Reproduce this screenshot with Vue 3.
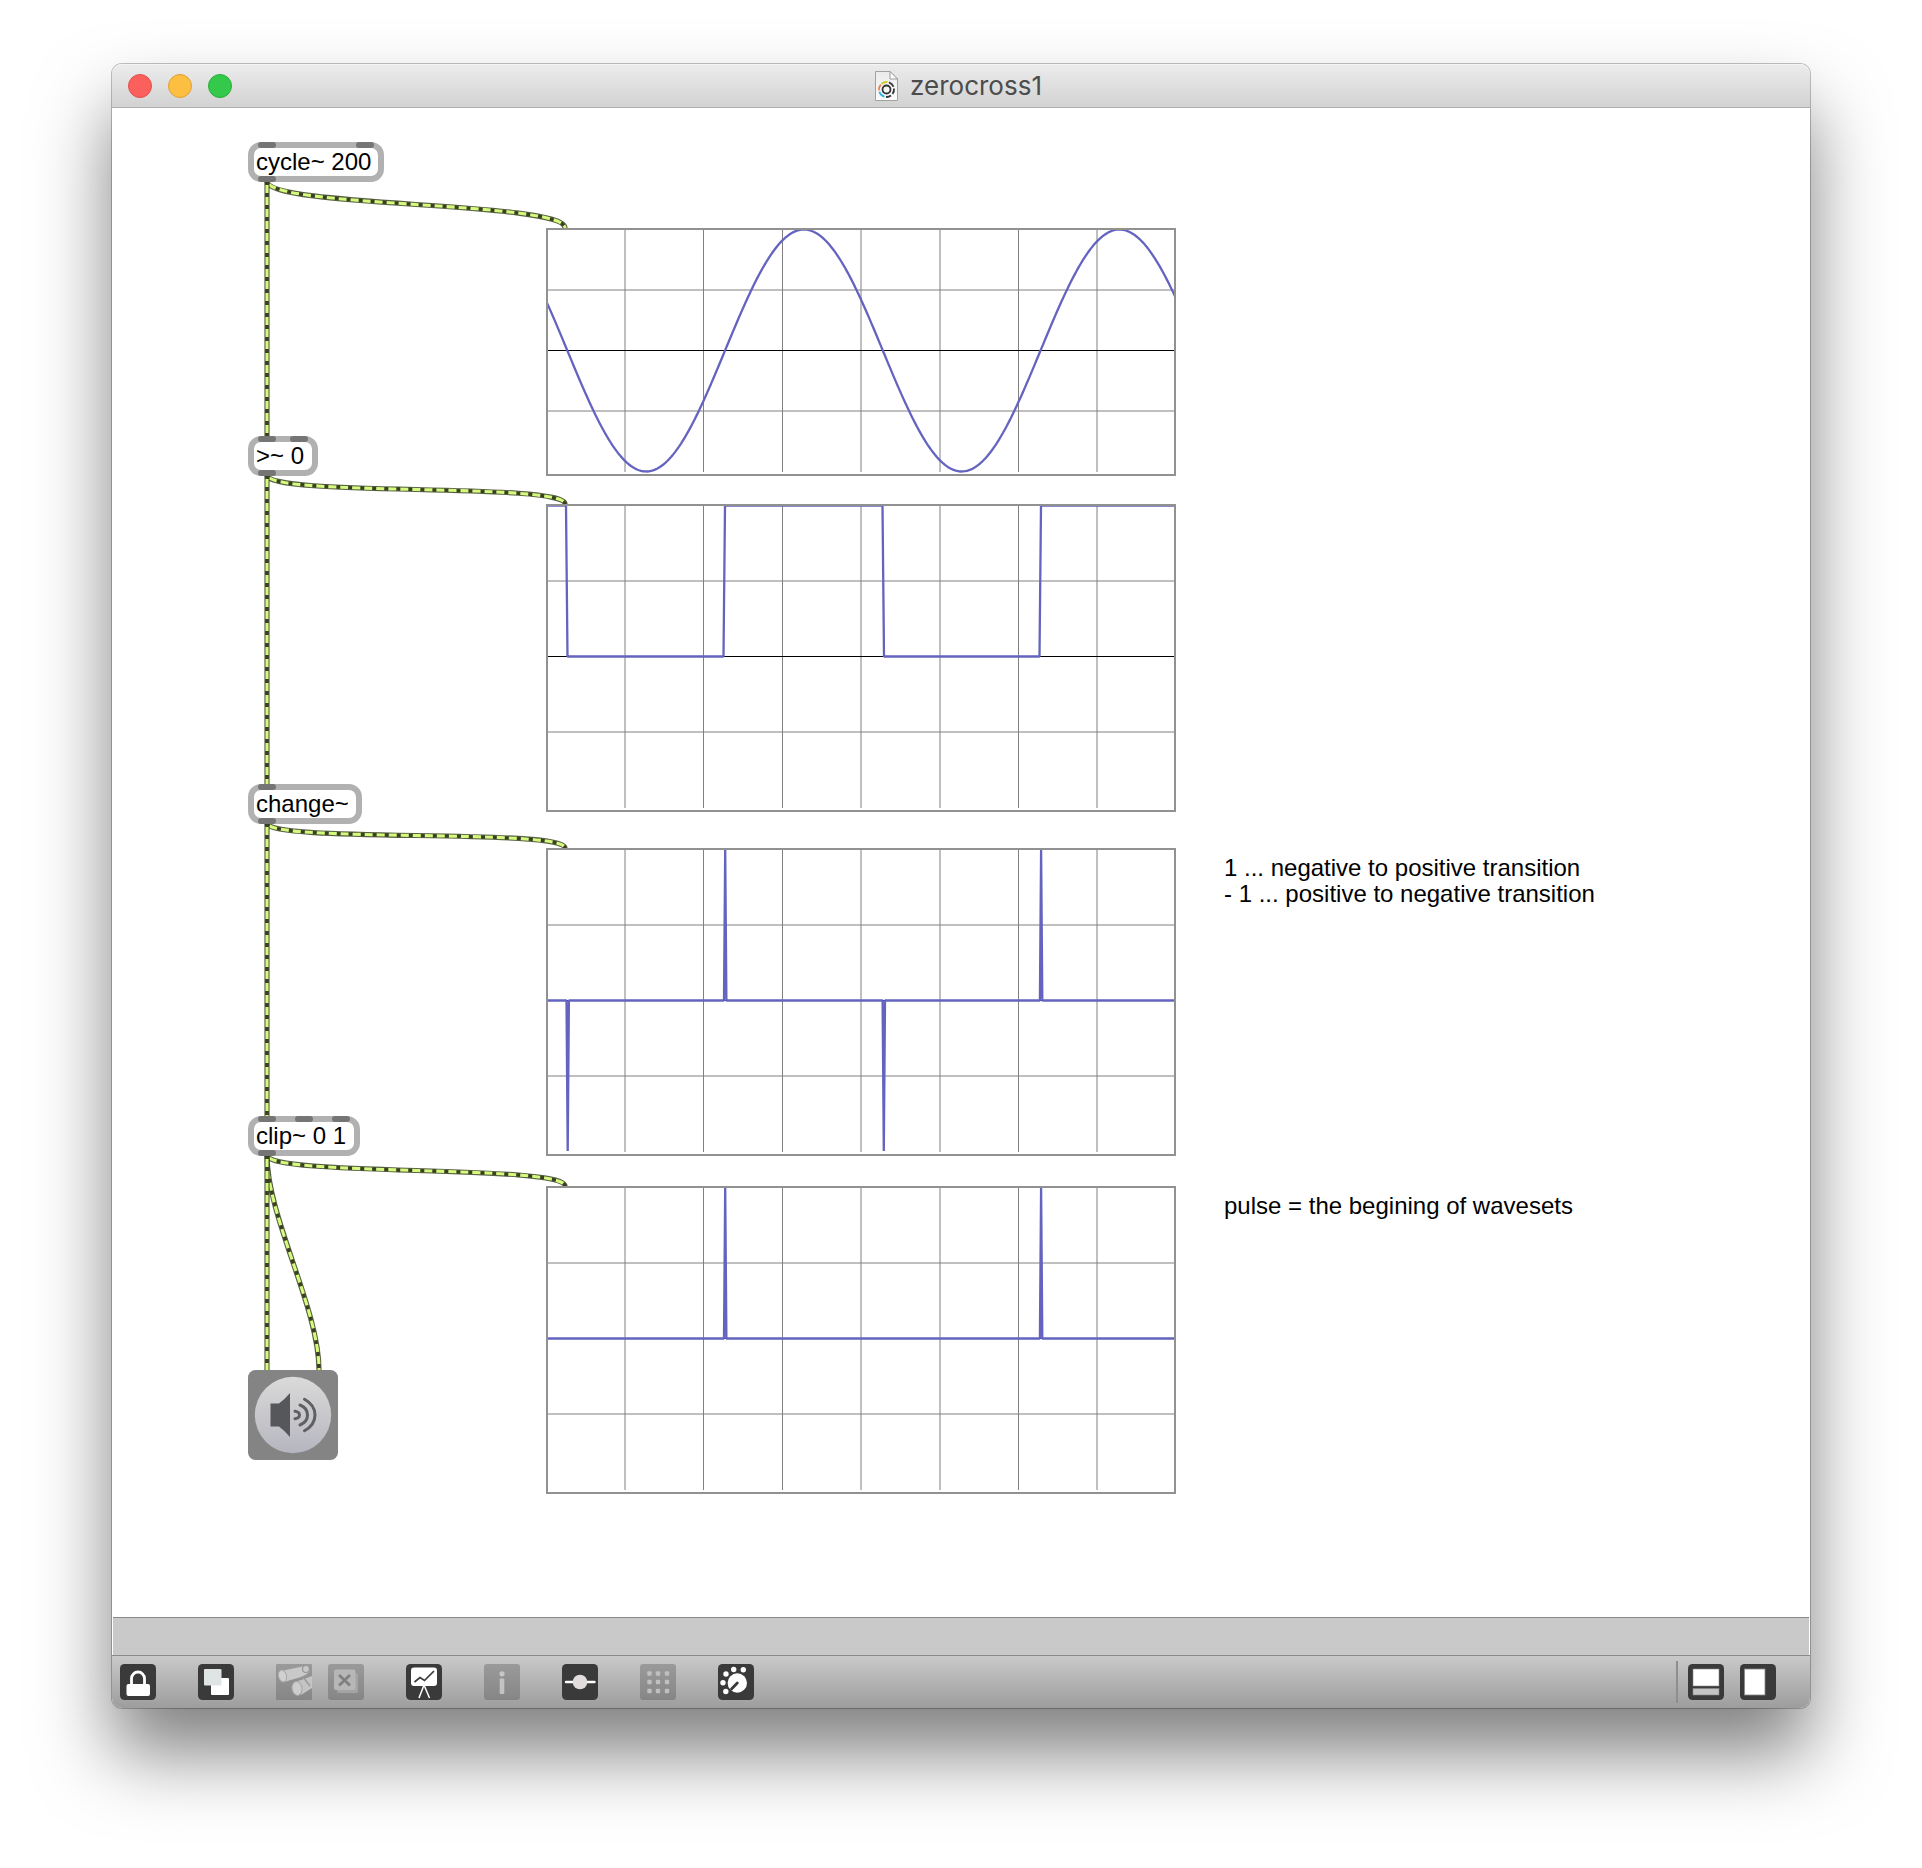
<script setup>
const OX = 112
const OY = 108

const objects = [
  { text: 'cycle~ 200', x: 248, y: 142, w: 136, inlets: [10, 108] },
  { text: '>~ 0', x: 248, y: 436, w: 70, inlets: [10, 42] },
  { text: 'change~', x: 248, y: 784, w: 114, inlets: [10] },
  { text: 'clip~ 0 1', x: 248, y: 1116, w: 112, inlets: [10, 47, 84] },
]

const comments = [
  { lines: ['1 ... negative to positive transition', '- 1 ... positive to negative transition'], x: 1224, y: 855 },
  { lines: ['pulse = the begining of wavesets'], x: 1224, y: 1193 },
]

function cable(x1, y1, x2, y2, d) {
  return `M${x1} ${y1}C${x1} ${y1 + d} ${x2} ${y2 - d} ${x2} ${y2}`
}

const cables = [
  cable(267, 181, 565, 228, 27),
  cable(267, 475, 565, 504, 22),
  cable(267, 823, 565, 848, 20),
  cable(267, 1155, 565, 1186, 22),
  cable(267, 1155, 319, 1370, 62),
  'M267 181V436',
  'M267 475V784',
  'M267 823V1116',
  'M267 1155V1370',
]

function sine() {
  const pts = []
  for (let x = 1; x <= 629; x += 2) {
    const y = 122.5 + 121 * Math.sin((2 * Math.PI * (x - 21.3)) / 315.5)
    pts.push(`${x},${y.toFixed(2)}`)
  }
  return pts.join(' ')
}

const scopes = [
  { x: 546, y: 228, h: 248, points: sine() },
  {
    x: 546, y: 504, h: 308,
    points: '2,1.5 20,1.5 21.5,152.5 177.5,152.5 179,1.5 336.5,1.5 338,152.5 493.5,152.5 495,1.5 628,1.5',
  },
  {
    x: 546, y: 848, h: 308,
    points: '2,152.5 20.5,152.5 21.7,303 22.9,152.5 178,152.5 179.2,1.5 180.4,152.5 336.6,152.5 337.8,303 339,152.5 493.9,152.5 495.1,1.5 496.3,152.5 628,152.5',
  },
  {
    x: 546, y: 1186, h: 308,
    points: '2,152.5 178,152.5 179.2,1.5 180.4,152.5 493.9,152.5 495.1,1.5 496.3,152.5 628,152.5',
  },
]

const columns = [79, 157.5, 236.5, 315, 394, 472.5, 551]
const dots = [9.5, 18, 27]
</script>

<template>
  <main class="desktop">
    <section class="window">
      <header class="titlebar">
        <div class="lights">
          <i class="light close"></i>
          <i class="light minimize"></i>
          <i class="light zoom"></i>
        </div>
        <div class="title">
          <svg class="doc" width="23" height="30" viewBox="0 0 23 30">
            <defs>
              <linearGradient id="paper" x1="0" y1="0" x2="0" y2="1">
                <stop offset="0" stop-color="#ebebeb" />
                <stop offset="1" stop-color="#fcfcfc" />
              </linearGradient>
            </defs>
            <path d="M.5 .5H15L22.5 8V29.5H.5Z" fill="url(#paper)" stroke="#a2a2a2" />
            <path d="M15 .5V8H22.5Z" fill="#fff" stroke="#999" />
            <circle cx="11.5" cy="18.5" r="4" fill="none" stroke="#333" stroke-width="1.8" />
            <g fill="none" stroke-width="1.8">
              <path d="M6.500 12.700A7.500 7.500 0 0 1 12.500 11.100" stroke="#c5cf25" />
              <path d="M14 11.400A7.500 7.500 0 0 1 18.500 15.800M19 17.500A7.500 7.500 0 0 1 17.500 22.900M16 24.500A7.500 7.500 0 0 1 11 26" stroke="#333" />
              <path d="M4 19.300A7.500 7.500 0 0 1 5.800 13.600" stroke="#ee7a45" />
              <path d="M4.300 20.800A7.500 7.500 0 0 0 9.500 25.700" stroke="#2db4e8" />
            </g>
          </svg>
          <span>zerocross1</span>
        </div>
      </header>

      <div class="patcher">
        <svg
          v-for="s in scopes"
          :key="s.y"
          class="node"
          :style="{ left: s.x - OX + 'px', top: s.y - OY + 'px' }"
          width="630"
          :height="s.h"
        >
          <g stroke="#808080" stroke-width="1">
            <path v-for="c in columns" :key="c" :d="`M${c} 2V${s.h - 4}`" />
            <path :d="`M2 ${1.5 + (s.h - 6) / 4}H628M2 ${1.5 + ((s.h - 6) * 3) / 4}H628`" />
          </g>
          <path :d="`M2 ${1.5 + (s.h - 6) / 2}H628`" stroke="#000" />
          <polyline :points="s.points" fill="none" stroke="#6464c0" stroke-width="2.3" stroke-linejoin="bevel" />
          <rect x="1" y="1" width="628" :height="s.h - 2" fill="none" stroke="#919191" stroke-width="2" />
        </svg>

        <svg class="cables" width="1698" height="1508" viewBox="112 108 1698 1508">
          <g v-for="d in cables" :key="d" fill="none">
            <path :d="d" stroke="#3b4423" stroke-opacity=".85" stroke-width="5.2" />
            <path :d="d" stroke="#383f22" stroke-width="3.2" />
            <path :d="d" stroke="#d5fa7e" stroke-width="3.1" stroke-dasharray="8 4" stroke-dashoffset="-4" />
          </g>
        </svg>

        <div
          v-for="o in objects"
          :key="o.text"
          class="node object"
          :style="{ left: o.x - OX + 'px', top: o.y - OY + 'px', width: o.w + 'px' }"
        >
          <i v-for="n in o.inlets" :key="n" class="port" :style="{ left: n + 'px' }"></i>
          <i class="port outlet"></i>
          <span>{{ o.text }}</span>
        </div>

        <svg class="node dac" width="90" height="90" viewBox="0 0 90 90">
          <defs>
            <linearGradient id="knob" x1="0" y1="0" x2="0" y2="1">
              <stop offset="0" stop-color="#dadada" />
              <stop offset=".5" stop-color="#c8c8cc" />
              <stop offset="1" stop-color="#b5b5bf" />
            </linearGradient>
          </defs>
          <rect width="90" height="90" rx="7.5" fill="#848484" />
          <circle cx="45" cy="45" r="38.2" fill="url(#knob)" />
          <path d="M22.500 33.500H31Q37 29 42 23V67Q37 61 31 56.500H22.500Z" fill="#55575a" />
          <g fill="none" stroke="#5e6063" stroke-width="3" stroke-linecap="round">
            <path d="M47 41.200Q51.500 42 51.500 45T47 48.800" />
            <path d="M52 35Q59.500 38 59.500 45T52 55" />
            <path d="M56.500 29.200Q67 35 67 45T56.500 60.800" />
          </g>
        </svg>

        <p
          v-for="c in comments"
          :key="c.y"
          class="node comment"
          :style="{ left: c.x - OX + 'px', top: c.y - OY + 'px' }"
        >
          <span v-for="l in c.lines" :key="l">{{ l }}</span>
        </p>
      </div>

      <div class="status"></div>

      <footer class="toolbar">
        <svg class="tool" viewBox="0 0 36 36">
          <rect width="36" height="36" rx="4.5" fill="#3a3a3a" />
          <path d="M11.500 22V14.500A6.500 6.500 0 0 1 24.500 14.500V22" fill="none" stroke="#fff" stroke-width="2.8" />
          <rect x="6.500" y="20" width="23.5" height="12" rx="2" fill="#fff" />
        </svg>
        <svg class="tool" viewBox="0 0 36 36">
          <rect width="36" height="36" rx="4.5" fill="#3a3a3a" />
          <rect x="13" y="14" width="18" height="17" rx="1" fill="#fff" />
          <rect x="6" y="5" width="17.5" height="16.5" rx="1" fill="#dfe5e5" />
        </svg>
        <svg class="tool pair" viewBox="0 0 36 36">
          <defs>
            <linearGradient id="dim" x1="0" y1="0" x2="0" y2="1">
              <stop offset="0" stop-color="#9a9a9a" />
              <stop offset="1" stop-color="#868686" />
            </linearGradient>
            <clipPath id="tile"><rect width="36" height="36" /></clipPath>
          </defs>
          <rect width="36" height="36" rx="1" fill="url(#dim)" />
          <g clip-path="url(#tile)">
            <path d="M5 7L24 3Q31 1 33 5T25 13L8 18Z" fill="#c9c9c9" />
            <ellipse cx="6.5" cy="12" rx="4" ry="6" transform="rotate(-15 6.5 12)" fill="#d0d0d0" stroke="#a8a8a8" />
            <circle cx="30" cy="5" r="3.5" fill="#c8c8c8" stroke="#969696" stroke-width="1.2" />
            <path d="M19 18L28 15L36 12V24L25 31Z" fill="#c4c4c4" />
            <path d="M27 13L34 22" stroke="#9b9b9b" stroke-width="1.5" />
            <ellipse cx="21" cy="24.5" rx="5" ry="7" transform="rotate(-10 21 24.5)" fill="#cdcdcd" stroke="#a2a2a2" />
          </g>
        </svg>
        <svg class="tool" viewBox="0 0 36 36">
          <rect width="36" height="36" rx="3" fill="url(#dim)" />
          <rect x="9" y="9" width="21" height="20" rx="2" fill="#a4a4a4" />
          <rect x="6" y="5.5" width="21.5" height="20.5" rx="2" fill="#b7b7b7" />
          <path d="M11 11L22 21.500M22 11L11 21.500" stroke="#808080" stroke-width="2.8" />
        </svg>
        <svg class="tool" viewBox="0 0 36 36">
          <rect width="36" height="36" rx="4.5" fill="#3a3a3a" />
          <rect x="5" y="3.5" width="26" height="18.5" rx="3" fill="#fff" />
          <path d="M8.500 18L14 13.500L18.500 16.500L28 7" fill="none" stroke="#3a3a3a" stroke-width="1.7" />
          <path d="M18 21L13 34M18 21L23.500 34" stroke="#fff" stroke-width="1.5" />
        </svg>
        <svg class="tool" viewBox="0 0 36 36">
          <rect width="36" height="36" rx="3" fill="url(#dim)" />
          <circle cx="18" cy="9.8" r="2.6" fill="#c6c6c6" />
          <rect x="15.7" y="14.5" width="4.6" height="15.5" rx="1" fill="#c3c3c3" />
        </svg>
        <svg class="tool" viewBox="0 0 36 36">
          <rect width="36" height="36" rx="4.5" fill="#3a3a3a" />
          <path d="M4 18H32.500" stroke="#fff" stroke-width="2.4" stroke-linecap="round" />
          <circle cx="18" cy="18" r="7.3" fill="#e2dcdc" />
        </svg>
        <svg class="tool" viewBox="0 0 36 36">
          <rect width="36" height="36" rx="3" fill="url(#dim)" />
          <template v-for="y in dots" :key="y">
            <rect v-for="x in dots" :key="x" :x="x - 2.2" :y="y - 2.2" width="4.4" height="4.4" rx="1" fill="#bfbfbf" />
          </template>
        </svg>
        <svg class="tool" viewBox="0 0 36 36">
          <rect width="36" height="36" rx="4.5" fill="#3a3a3a" />
          <circle cx="19.3" cy="19" r="9.7" fill="#fff" />
          <path d="M13.500 25L19.300 19" stroke="#3a3a3a" stroke-width="2.8" stroke-linecap="round" />
          <g fill="#fff">
            <circle cx="7.8" cy="27.5" r="2.7" />
            <circle cx="5" cy="18.8" r="2.7" />
            <circle cx="8" cy="10" r="2.7" />
            <circle cx="15.7" cy="5.5" r="2.7" />
            <circle cx="25.3" cy="5.8" r="2.7" />
          </g>
        </svg>
        <i class="divider"></i>
        <svg class="tool panel" viewBox="0 0 36 36">
          <rect width="36" height="36" rx="4.5" fill="#3a3a3a" />
          <rect x="5" y="5" width="26" height="17" fill="#fff" stroke="#888" stroke-width=".6" />
          <rect x="5" y="24.5" width="26" height="6.5" fill="#c4c4c4" stroke="#888" stroke-width=".6" />
        </svg>
        <svg class="tool side" viewBox="0 0 36 36">
          <rect width="36" height="36" rx="4.5" fill="#3a3a3a" />
          <rect x="4.5" y="5" width="20.5" height="26" fill="#fff" stroke="#888" stroke-width=".8" />
        </svg>
      </footer>
    </section>
  </main>
</template>

<style>
body {
  margin: 0;
  background: #fff;
}
</style>

<style scoped>
.desktop {
  box-sizing: border-box;
  width: 1922px;
  height: 1868px;
  padding: 64px 112px 0;
  overflow: hidden;
  background: #fff;
  font-family: "Liberation Sans", Arial, sans-serif;
}
.window {
  display: flex;
  flex-direction: column;
  width: 1698px;
  height: 1644px;
  border-radius: 10px;
  background: #fff;
  box-shadow: 0 0 0 1px rgba(0, 0, 0, 0.24), 0 45px 76px rgba(0, 0, 0, 0.5);
}
.titlebar {
  box-sizing: border-box;
  display: grid;
  grid-template-columns: 1fr auto 1fr;
  align-items: center;
  height: 44px;
  padding: 0 16px;
  border-bottom: 1px solid #aeaeae;
  border-radius: 10px 10px 0 0;
  background: linear-gradient(#ececec, #d2d2d2);
  box-shadow: inset 0 1px #f3f3f3;
}
.lights {
  display: flex;
  gap: 16px;
}
.light {
  box-sizing: border-box;
  width: 24px;
  height: 24px;
  border: 1px solid;
  border-radius: 50%;
}
.close {
  background: #fc605c;
  border-color: #e2504d;
}
.minimize {
  background: #fdbf41;
  border-color: #dfa035;
}
.zoom {
  background: #35c94b;
  border-color: #27ae38;
}
.title {
  display: flex;
  align-items: center;
  gap: 12px;
  margin-left: -5px;
  padding-top: 1px;
  color: #4c4c4c;
  font: 26px/42px Inter, sans-serif;
}
.patcher {
  position: relative;
  height: 1509px;
}
.node,
.cables {
  position: absolute;
}
.cables {
  left: 0;
  top: 0;
}
.object {
  box-sizing: border-box;
  height: 40px;
  padding-left: 2px;
  border: 6px solid #b1b1b1;
  border-radius: 13px;
  background: #fff;
  color: #000;
  font-size: 24px;
  line-height: 27px;
  white-space: nowrap;
}
.port {
  position: absolute;
  top: -6px;
  width: 18px;
  height: 6px;
  margin-left: -6px;
  border-radius: 3px;
  background: #757575;
}
.outlet {
  top: 28px;
  left: 10px;
}
.dac {
  left: 136px;
  top: 1262px;
}
.comment {
  display: flex;
  flex-direction: column;
  margin: 0;
  color: #000;
  font-size: 24px;
  line-height: 26px;
  white-space: nowrap;
}
.status {
  box-sizing: border-box;
  height: 38px;
  margin: 0 1px;
  border-top: 1px solid #8a8a8a;
  background: #c9c9c9;
}
.toolbar {
  box-sizing: border-box;
  display: flex;
  align-items: center;
  flex: 1;
  gap: 42px;
  padding: 0 34px 0 8px;
  border-top: 1px solid #8a8a8a;
  border-radius: 0 0 10px 10px;
  background: linear-gradient(#c9c9c9, #9d9d9d);
}
.tool {
  width: 36px;
  height: 36px;
  flex: none;
}
.pair {
  margin-right: -26px;
}
.divider {
  width: 2px;
  height: 42px;
  margin-left: auto;
  background: #8e8e8e;
}
.panel {
  margin-left: -32px;
  margin-left: -20px;
}
.divider {
  margin-right: -12px;
}
.side {
  margin-left: -26px;
}
</style>
